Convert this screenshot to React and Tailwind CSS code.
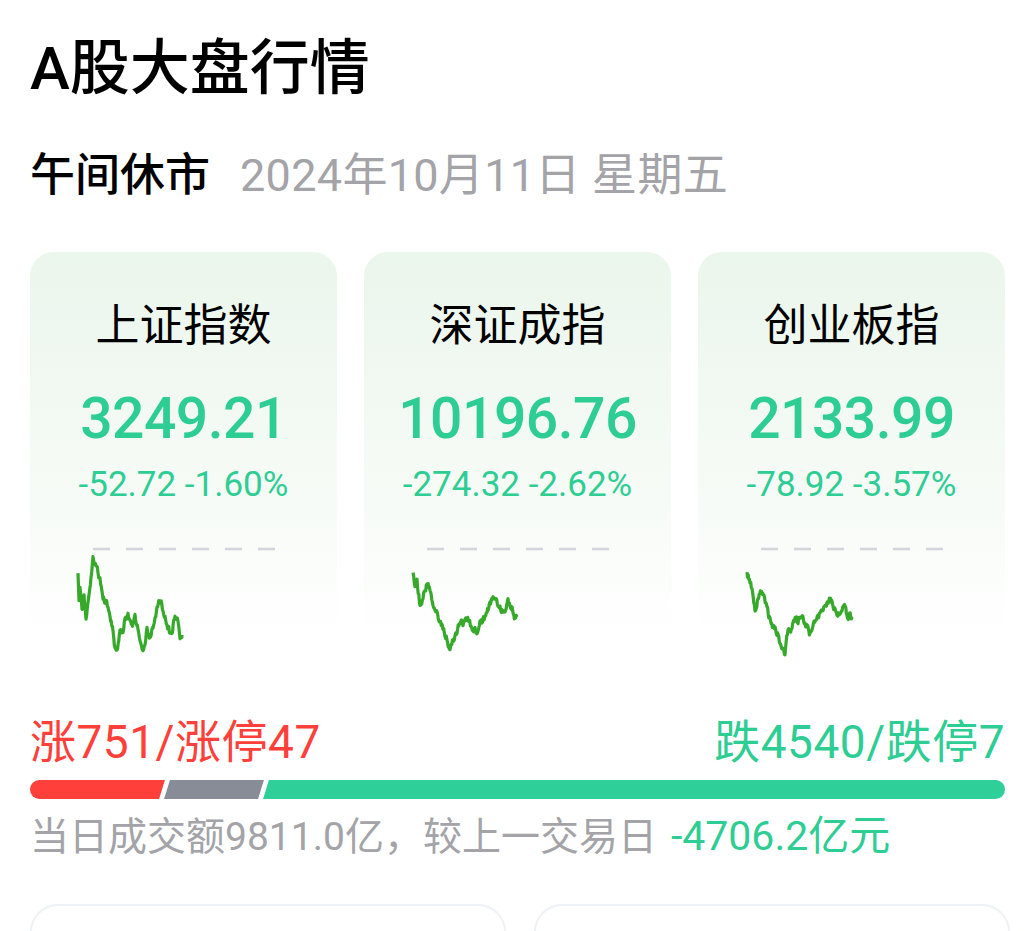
import React from "react";

// seeded random so the jitter on the lines stays the same on every render
const mulberry32 = (a) => () => {
  a |= 0;
  a = (a + 0x6d2b79f5) | 0;
  let t = Math.imul(a ^ (a >>> 15), 1 | a);
  t = (t + Math.imul(t ^ (t >>> 7), 61 | t)) ^ t;
  return ((t ^ (t >>> 14)) >>> 0) / 4294967296;
};

const makePath = (anchors, offX, offY, seed) => {
  const rnd = mulberry32(seed);
  let d = "";
  let dev = 0;
  for (let i = 0; i < anchors.length - 1; i++) {
    const [x0, y0] = anchors[i];
    const [x1, y1] = anchors[i + 1];
    const steps = Math.max(1, Math.round((x1 - x0) * 1.5));
    for (let s = 0; s < steps; s++) {
      const t = s / steps;
      dev = dev * 0.4 + (rnd() - 0.5) * 6;
      const x = x0 + (x1 - x0) * t - offX;
      const y = y0 + (y1 - y0) * t + dev - offY;
      d += (d ? "L" : "M") + x.toFixed(1) + " " + y.toFixed(1);
    }
  }
  const [lx, ly] = anchors[anchors.length - 1];
  d += "L" + (lx - offX) + " " + (ly - offY);
  return d;
};

const indices = [
  {
    name: "上证指数",
    price: "3249.21",
    change: "-52.72 -1.60%",
    left: 30,
    seed: 11,
    line: [
      [78, 573], [79, 600], [80, 585], [82, 610], [84, 595], [86, 618], [88, 605],
      [91, 580], [93, 557], [96, 565], [100, 580], [103, 597], [106, 603], [108, 607],
      [110, 617], [113, 632], [115, 647], [117, 653], [120, 630], [123, 633], [125, 620],
      [128, 613], [132, 627], [135, 618], [138, 630], [140, 637], [143, 653], [147, 630],
      [150, 637], [153, 628], [157, 610], [160, 598], [163, 610], [167, 627], [170, 632],
      [172, 630], [175, 617], [178, 623], [180, 638], [183, 637],
    ],
  },
  {
    name: "深证成指",
    price: "10196.76",
    change: "-274.32 -2.62%",
    left: 364,
    seed: 23,
    line: [
      [413, 575], [415, 588], [417, 580], [420, 607], [423, 597], [427, 583], [430, 590],
      [433, 602], [437, 613], [440, 620], [443, 628], [447, 640], [450, 653], [453, 640],
      [457, 633], [460, 620], [463, 625], [467, 618], [471, 625], [477, 633], [480, 622],
      [483, 620], [487, 615], [490, 602], [495, 598], [498, 607], [502, 610], [505, 613],
      [508, 602], [512, 608], [515, 617], [517, 617],
    ],
  },
  {
    name: "创业板指",
    price: "2133.99",
    change: "-78.92 -3.57%",
    left: 698,
    seed: 37,
    line: [
      [747, 572], [750, 583], [752, 587], [755, 610], [758, 598], [761, 592], [764, 595],
      [767, 607], [770, 620], [773, 627], [777, 632], [780, 643], [785, 653], [788, 630],
      [792, 628], [795, 618], [798, 622], [803, 618], [807, 627], [810, 635], [814, 622],
      [818, 617], [822, 613], [825, 608], [830, 600], [833, 605], [837, 612], [840, 615],
      [844, 603], [847, 615], [852, 617],
    ],
  },
];

const IndexCard = ({ item }) => {
  const path = makePath(item.line, item.left, 542, item.seed);
  return (
    <div className="flex flex-col items-center h-[428px] rounded-[24px] bg-gradient-to-b from-[#ebf6ec] via-[#f7fbf7] via-60% to-white to-90%">
      <p className="pt-[48px] text-[44px] leading-[52px] text-black">{item.name}</p>
      <p className="mt-[35px] text-[57px] leading-[64px] font-medium tracking-[-0.5px] text-[#2ecd94]">
        {item.price}
      </p>
      <p className="mt-[14px] text-[35px] leading-[40px] text-[#2ecd94]">{item.change}</p>
      <svg className="mt-[37px] self-start" width="307" height="125" viewBox="0 0 307 125">
        <line
          x1="63"
          y1="7"
          x2="247"
          y2="7"
          stroke="#d3d4dc"
          strokeWidth="2.5"
          strokeDasharray="17 16"
        />
        <path d={path} fill="none" stroke="#36a92b" strokeWidth="3.2" strokeLinejoin="round" />
      </svg>
    </div>
  );
};

export default function App() {
  return (
    <div className="min-h-screen bg-white pl-[30px] pr-[27px] pt-[35px] font-['Roboto','Noto_Sans_CJK_SC',sans-serif] overflow-hidden">
      <h1 className="text-[60px] leading-[68px] font-medium text-black">A股大盘行情</h1>

      <div className="mt-[45px] flex items-center text-[45px] leading-[56px]">
        <span className="font-medium text-black">午间休市</span>
        <span className="ml-[30px] tracking-[0.3px] text-[#a3a3a8]">2024年10月11日 星期五</span>
      </div>

      <div className="mt-[48px] grid grid-cols-3 gap-[27px]">
        {indices.map((item) => (
          <IndexCard key={item.name} item={item} />
        ))}
      </div>

      <div className="mt-[36px] flex justify-between text-[46px] leading-[52px] tracking-[0.5px]">
        <span className="text-[#fe3f3a]">涨751/涨停47</span>
        <span className="text-[#2ecd94]">跌4540/跌停7</span>
      </div>

      <div className="mt-[12px] flex h-[19px] gap-[5px] overflow-hidden rounded-full">
        <div className="ml-[-8px] w-[140px] -skew-x-[17deg] bg-[#fe3f3a]" />
        <div className="w-[94px] -skew-x-[17deg] bg-[#878c96]" />
        <div className="mr-[-8px] flex-1 -skew-x-[17deg] bg-[#2ecf98]" />
      </div>

      <p className="mt-[15px] text-[39px] leading-[44px] text-[#a3a3a8]">
        当日成交额9811.0亿，较上一交易日
        <span className="ml-[14px] text-[41px] text-[#2ecd94]">-4706.2亿元</span>
      </p>

      <div className="mt-[45px] mr-[-5px] grid grid-cols-2 gap-[28px]">
        <div className="h-[300px] rounded-[28px] border-2 border-[#eef1f5]" />
        <div className="h-[300px] rounded-[28px] border-2 border-[#eef1f5]" />
      </div>
    </div>
  );
}
